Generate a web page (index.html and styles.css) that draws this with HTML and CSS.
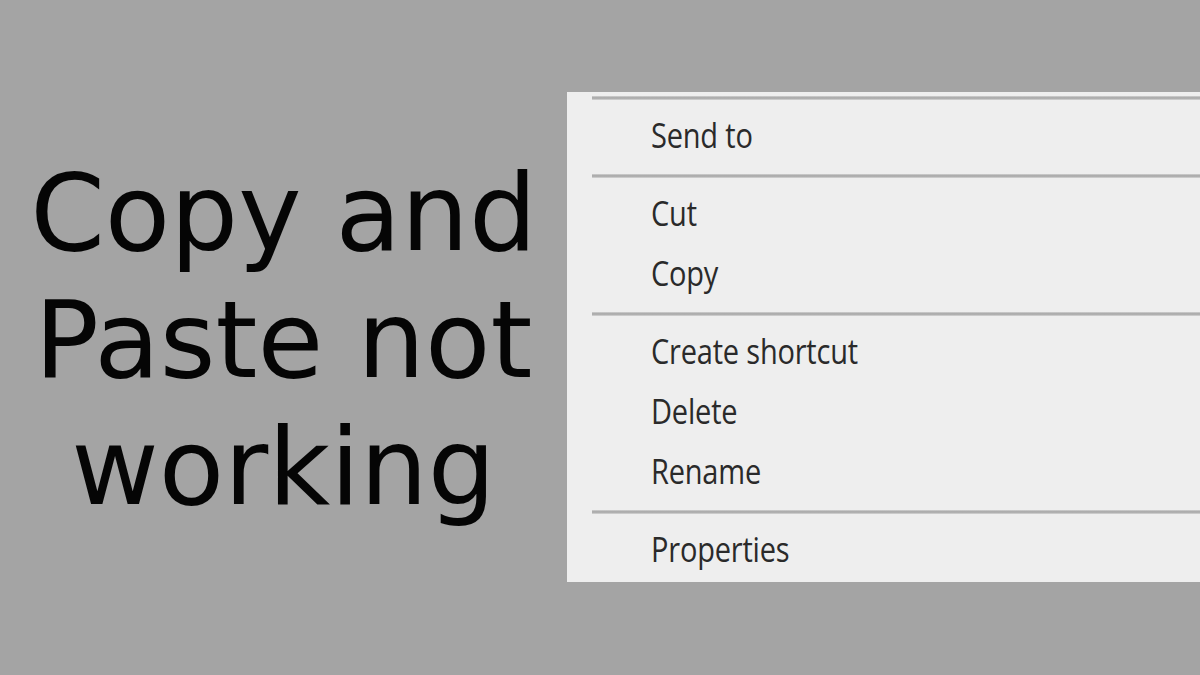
FILE: index.html
```html
<!DOCTYPE html>
<html lang="en">
<head>
<meta charset="utf-8">
<title>Copy and Paste not working</title>
<link rel="stylesheet" href="styles.css">
</head>
<body>
<main class="page">
  <section class="title-col">
    <h1 class="title">Copy and<br>Paste not<br>working</h1>
  </section>
  <nav class="menu">
    <div class="sep sep-first"></div>
    <div class="item"><span class="label">Send to</span></div>
    <div class="sep"></div>
    <div class="item"><span class="label">Cut</span></div>
    <div class="item"><span class="label">Copy</span></div>
    <div class="sep"></div>
    <div class="item"><span class="label">Create shortcut</span></div>
    <div class="item"><span class="label">Delete</span></div>
    <div class="item"><span class="label">Rename</span></div>
    <div class="sep"></div>
    <div class="item"><span class="label">Properties</span></div>
  </nav>
</main>
</body>
</html>
```
FILE: styles.css
```css
html, body {
  margin: 0;
  padding: 0;
  width: 1200px;
  height: 675px;
  overflow: hidden;
  background: #a4a4a4;
}

.page {
  display: flex;
  align-items: flex-start;
  width: 1200px;
  height: 675px;
}

.title-col {
  width: 567px;
  flex: none;
  padding-top: 150px;
  box-sizing: border-box;
}

.title {
  margin: 0;
  font-family: "DejaVu Sans", sans-serif;
  font-weight: normal;
  font-size: 107px;
  line-height: 127px;
  color: #050505;
  text-align: center;
}

.menu {
  flex: 1;
  margin-top: 92px;
  height: 490px;
  background: #eeeeee;
  box-sizing: border-box;
  padding-left: 25px;
  display: flex;
  flex-direction: column;
}

.sep {
  height: 4px;
  margin: 7px 0 7px 0;
  background: linear-gradient(#d2d2d2, #a6a6a6 45%, #b4b4b4 70%, #dadada);
}

.sep-first {
  margin-top: 4px;
  margin-bottom: 7px;
}

.item {
  height: 60px;
  line-height: 60px;
  padding-left: 59px;
  font-family: "Open Sans", "Noto Sans", sans-serif;
  font-size: 29px;
  color: #2a2a2a;
  white-space: nowrap;
}

.label {
  display: inline-block;
  transform: scaleY(1.2);
  transform-origin: 0 41px;
  letter-spacing: -0.2px;
}
```
